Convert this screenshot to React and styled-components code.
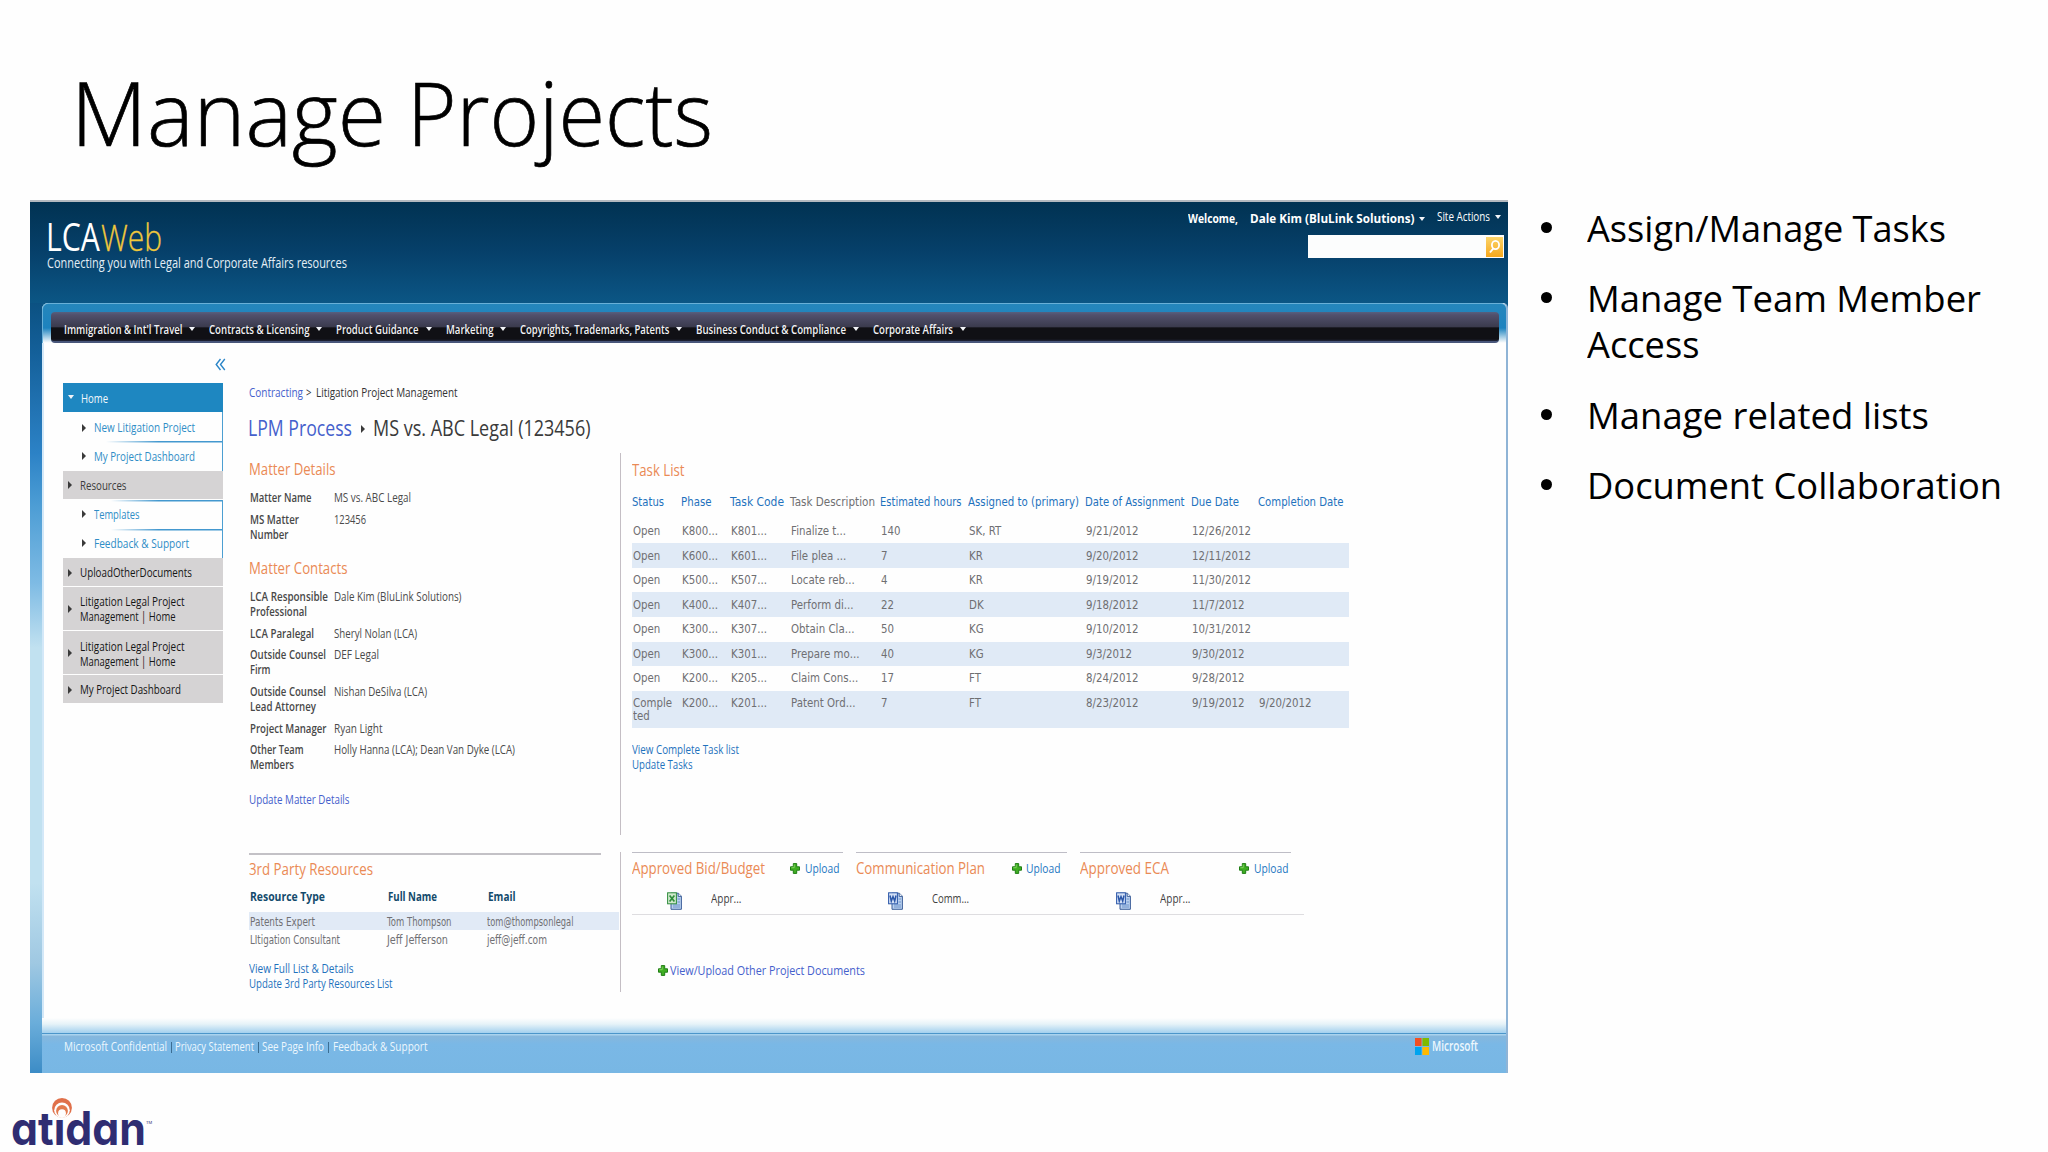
import React, { useLayoutEffect, useRef, useState } from "react";
import styled, { createGlobalStyle, css } from "styled-components";

const segoe = `"Open Sans", "Noto Sans", sans-serif`;
const tahoma = `"DejaVu Sans", sans-serif`;

const GlobalStyle = createGlobalStyle`
  * { box-sizing: border-box; }
  body { margin: 0; background: #fefefe; font-family: ${segoe}; }
  ul { list-style: none; margin: 0; padding: 0; }
`;

/* ---------- condensed text ---------- */
const FitBox = styled.span`
  display: inline-block;
  flex: none;
  width: ${(p) => p.$w}px;
  white-space: nowrap;
  vertical-align: top;
`;
const FitInner = styled.span`
  display: inline-block;
  white-space: nowrap;
  transform-origin: 0 50%;
`;
function Fit({ w, children }) {
  const ref = useRef(null);
  const [scale, setScale] = useState(1);
  useLayoutEffect(() => {
    setScale(w / parseFloat(getComputedStyle(ref.current).width));
  }, [w]);
  return (
    <FitBox $w={w}>
      <FitInner ref={ref} style={{ transform: `scaleX(${scale})` }}>{children}</FitInner>
    </FitBox>
  );
}
const Narrow = styled.span`
  display: inline-block;
  white-space: nowrap;
  transform-origin: 0 50%;
  transform: scaleX(0.89);
`;

/* ---------- slide ---------- */
const Slide = styled.main`
  width: 2048px;
  height: 1152px;
  overflow: hidden;
  background: #fefefe;
  color: #000;
`;
const SlideTitle = styled.h1`
  display: flex;
  gap: 21px;
  margin: 0;
  height: 200px;
  padding: 61.5px 0 0 70.5px;
  font-size: 89px;
  line-height: 100px;
  font-weight: 300;
  -webkit-text-stroke: 0.7px #000;
`;
const SlideBody = styled.div`
  display: flex;
  height: 873px;
  padding-left: 30px;
`;
const Bullets = styled.ul`
  padding: 5.7px 0 0 32.5px;
  display: flex;
  flex-direction: column;
  gap: 25.4px;
  font-size: 36.4px;
  line-height: 45.4px;
`;
const Bullet = styled.li`
  display: flex;
  gap: 35.5px;
  &::before {
    content: "";
    flex: none;
    width: 11px;
    height: 11px;
    margin-top: 16px;
    border-radius: 50%;
    background: #000;
  }
`;
const BulletLines = styled.div`
  display: flex;
  flex-direction: column;
`;

/* ---------- web page ---------- */
const Page = styled.section`
  width: 1478px;
  height: 873px;
  flex: none;
  display: flex;
  flex-direction: column;
  border-top: 2px solid #b4b9bf;
  background: linear-gradient(#013252 0, #06406a 50px, #0b5685 101px, #0b5685 100%);
`;
const Header = styled.header`
  height: 101px;
  flex: none;
  display: flex;
  justify-content: space-between;
  padding: 8px 4px 0 16px;
  color: #fff;
`;
const Brand = styled.div`
  padding-top: 9px;
`;
const BrandName = styled.div`
  display: flex;
  gap: 1px;
  height: 36px;
  font-size: 37.5px;
  line-height: 36px;
`;
const Web = styled.span`
  color: #f0c83c;
  font-weight: 300;
  -webkit-text-stroke: 0.3px #f0c83c;
`;
const Tagline = styled.div`
  margin-top: 0.3px;
  padding-left: 1px;
  font-size: 14px;
  line-height: 16px;
  color: #e4eef5;
`;
const Account = styled.div`
  display: flex;
  flex-direction: column;
  align-items: flex-end;
`;
const AccountRow = styled.div`
  display: flex;
  height: 24px;
  margin-top: 1px;
  padding-right: 3.2px;
  font-size: 12.6px;
  line-height: 16px;
  font-weight: 700;
`;
const User = styled.span`
  display: flex;
  align-items: center;
  height: 16px;
  gap: 4.5px;
  margin-left: 12px;
`;
const SiteActions = styled.span`
  display: flex;
  align-items: center;
  height: 16px;
  gap: 4.5px;
  margin: -2px 0 0 12px;
  font-weight: 400;
`;
const Search = styled.div`
  width: 196px;
  height: 23px;
  display: flex;
  justify-content: flex-end;
  align-items: center;
  padding-right: 1px;
  background: #fcfdfd;
`;
const SearchButton = styled.span`
  width: 17px;
  height: 20px;
  display: flex;
  background: linear-gradient(#fbd46a, #f7a81c);
`;
const Caret = styled.i`
  width: 0;
  height: 0;
  flex: none;
  border: ${(p) => p.$s || 3}px solid transparent;
  border-bottom-width: 0;
  border-top: ${(p) => (p.$s || 3) + 1.5}px solid #f2f4f8;
`;
const Arrow = styled.i`
  width: 0;
  height: 0;
  flex: none;
  border: 4px solid transparent;
  border-right-width: 0;
  border-left: ${(p) => p.$d || 4}px solid #3a3a3a;
`;

const Lower = styled.div`
  flex: 1;
  display: flex;
  min-height: 0;
`;
const Edge = styled.div`
  width: 12px;
  flex: none;
  background: linear-gradient(#0b5182 0, #14609a 50px, #2c82c6 150px, #4b9cd4 200px, #7ebbe4 280px,
    #c1e1f0 345px, #c1e1f0 580px, #9fc8e2 660px, #6aadda 720px, #3c8cc6 770px);
`;
const Frame = styled.div`
  flex: 1;
  display: flex;
  flex-direction: column;
  min-width: 0;
  background: #fff;
  border-right: 2px solid #8fb4d6;
  border-radius: 6px 5px 0 0;
`;
const NavShell = styled.div`
  height: 40px;
  flex: none;
  padding: 8px 7px 0 8px;
  border-top: 1.5px solid #68b0d8;
  border-left: 1px solid #68b0d8;
  border-radius: 6px 5px 0 0;
  background: linear-gradient(#2586bc 0, #1d83bf 24px, #ffffff 39px);
`;
const NavBar = styled.nav`
  height: 31px;
  display: flex;
  gap: 14px;
  padding: 8.7px 0 0 12.7px;
  border-radius: 4px;
  border-bottom: 2px solid #48567a;
  background: linear-gradient(#56607f 0, #51506c 3px, #3b3b4e 14.5px, #101015 16px, #101015 27px, #20253a 29px);
`;
const NavItem = styled.a`
  display: flex;
  align-items: center;
  height: 16px;
  gap: 6.8px;
  font-size: 11.8px;
  line-height: 16px;
  font-weight: 600;
  color: #f1f1f4;
`;
const Content = styled.div`
  flex: 1;
  display: flex;
  min-height: 0;
  border-left: 2px solid #d3e8f8;
  padding-left: 19px;
  background: #fefefe;
`;

/* ---------- sidebar ---------- */
const Sidebar = styled.aside`
  width: 160px;
  flex: none;
`;
const Collapse = styled.div`
  height: 39.5px;
  width: 163px;
  padding-top: 15px;
  display: flex;
  justify-content: flex-end;
`;
const SideItem = styled.a`
  font-size: 12px;
  line-height: 15px;
  height: ${(p) => p.$h}px;
  padding-top: ${(p) => p.$pt}px;
  margin-bottom: ${(p) => p.$mb || 0}px;
  display: flex;
  gap: 8px;
  padding-left: ${(p) => (p.$kind === "sub" ? 18.5 : 5)}px;
  ${(p) =>
    p.$kind === "active" &&
    css`
      background: #1e87c1;
      color: #f4f9fc;
      padding-left: 4.5px;
      gap: 7px;
    `}
  ${(p) =>
    p.$kind === "group" &&
    css`
      background: #d5d3d4;
      color: ${p.$soft ? "#3c3c3c" : "#161616"};
    `}
  ${(p) =>
    p.$kind === "sub" &&
    css`
      color: #2f8dc6;
      border-right: 1px solid #4c9fd2;
      background: ${p.$rule === "top"
        ? "linear-gradient(90deg, transparent 30%, #4398cf 60%) 0 0 / 100% 1.5px no-repeat"
        : p.$rule === "bottom"
          ? "linear-gradient(90deg, transparent 27%, #4398cf 60%) 0 100% / 100% 1.5px no-repeat"
          : "none"};
    `}
  & > i { margin-top: ${(p) => (p.$two ? 10.5 : 3.5)}px; }
`;
const Stack = styled.span`
  display: flex;
  flex-direction: column;
`;

/* ---------- main column ---------- */
const Main = styled.div`
  flex: 1;
  padding: 42.4px 0 0 26px;
  font-size: 12px;
  line-height: 15px;
  color: #4a4a4a;
`;
const Crumbs = styled.div`
  display: flex;
  gap: 3.8px;
  height: 15px;
  margin-left: -0.5px;
  color: #333;
`;
const Link = styled.a`
  color: ${(p) => (p.$tone === "violet" ? "#4560cc" : "#1f72bd")};
`;
const Heading = styled.h2`
  margin: 14.8px 0 11.8px -0.7px;
  display: flex;
  align-items: center;
  height: 26px;
  font-size: 21.5px;
  line-height: 26px;
  font-weight: 400;
  color: #3a3a3a;
  & > i { margin: 2px 8px 0 8.5px; }
`;
const Split = styled.div`
  display: flex;
  height: ${(p) => p.$h}px;
  margin-bottom: 17.5px;
`;
const LeftCol = styled.div`
  width: 372px;
  flex: none;
  border-right: 1px solid #c4bec4;
  padding-top: ${(p) => p.$pt || 0}px;
`;
const RightCol = styled.div`
  padding: ${(p) => p.$pt || 0}px 0 0 11px;
`;
const Section = styled.h3`
  margin: ${(p) => p.$m || "0"};
  height: 20px;
  font-size: 16.5px;
  line-height: 20px;
  font-weight: 400;
  color: #ea8a55;
`;
const Field = styled.div`
  display: grid;
  grid-template-columns: 84.5px 1fr;
  padding: 0 0 6.65px 0.6px;
`;
const FieldLabel = styled.span`
  display: flex;
  flex-direction: column;
  font-weight: 600;
  color: #484848;
`;
const Links = styled.div`
  margin-top: ${(p) => p.$mt}px;
  display: flex;
  flex-direction: column;
`;

const TaskTable = styled.div`
  width: 717px;
  margin-top: 15.7px;
  font-family: ${tahoma};
  font-size: 11.5px;
  color: #6f6f72;
`;
const TaskGrid = styled.div`
  display: grid;
  grid-template-columns: 49px 49.2px 60px 89.5px 88.2px 117.3px 106px 67px 1fr;
`;
const TaskHead = styled(TaskGrid)`
  height: 23.5px;
  line-height: 15px;
  & > a:nth-child(4) { color: #6f6f72; }
`;
const TaskRow = styled(TaskGrid)`
  height: ${(p) => (p.$tall ? 37.2 : 24.55)}px;
  padding: 6.2px 0 0 1.2px;
  line-height: 13px;
  background: ${(p) => (p.$striped ? "#e0eaf6" : "transparent")};
`;

const Rule = styled.div`
  width: ${(p) => p.$w}px;
  height: ${(p) => p.$t || 1.5}px;
  margin-top: ${(p) => p.$mt || 0}px;
  background: ${(p) => p.$c || "#c3c1c6"};
`;
const ResGrid = styled.div`
  display: grid;
  grid-template-columns: 137.4px 100px 1fr;
  padding-left: 0.6px;
`;
const ResHead = styled(ResGrid)`
  margin-top: 10.2px;
  height: 23.4px;
  font-weight: 700;
  color: #134a6c;
  padding-left: 1.3px;
`;
const ResRow = styled(ResGrid)`
  width: 370px;
  height: 18px;
  padding-top: 3.9px;
  font-family: ${tahoma};
  font-size: 11.5px;
  line-height: 13px;
  color: #707074;
  background: ${(p) => (p.$striped ? "#e1eaf6" : "transparent")};
`;
const Docs = styled.div`
  display: grid;
  grid-template-columns: 210.5px 210.5px 210.5px;
  column-gap: 13.5px;
  height: 61.5px;
`;
const Doc = styled.div`
  border-top: 1.6px solid #bebdc6;
  padding-top: 4.2px;
`;
const DocHead = styled.div`
  display: flex;
  justify-content: space-between;
  height: 33.7px;
  padding-right: ${(p) => p.$pr}px;
`;
const Upload = styled.a`
  display: flex;
  gap: 4.5px;
  padding-top: 3.2px;
  color: #1f78c2;
  & > svg { margin-top: 2.5px; }
`;
const DocFile = styled.div`
  display: flex;
  gap: 29px;
  padding-left: ${(p) => p.$pl}px;
  color: #3f3f3f;
  & > svg { margin-top: 1px; }
`;
const OtherDocs = styled(Upload)`
  margin: 44.8px 0 0 26px;
  gap: 2px;
  color: #4560cc;
`;

/* ---------- footer ---------- */
const Fade = styled.div`
  height: 15px;
  flex: none;
  background: linear-gradient(#fefefe, #e6f3f8 40%, #a3d0ee);
`;
const Footer = styled.footer`
  height: 40px;
  flex: none;
  display: flex;
  justify-content: space-between;
  padding: 4px 28px 0 22px;
  border-top: 1px solid #4c96ca;
  background: linear-gradient(#a9d3ee 0, #a9d3ee 1px, #86b7dc 2px, #7ab8e6 10px, #78b7e4 100%);
  font-size: 12px;
  line-height: 15px;
  color: #edf7fd;
`;
const FooterLinks = styled.div`
  display: flex;
  gap: 3.2px;
  padding-top: 1px;
`;
const Bar = styled.i`
  width: 1px;
  height: 11px;
  margin: 3px 0 0 0.8px;
  background: #3b6d92;
`;
const Microsoft = styled.div`
  display: flex;
  gap: 3px;
  font-size: 13.5px;
  font-weight: 600;
  line-height: 16px;
`;
const Atidan = styled.div`
  position: relative;
  display: flex;
  align-items: flex-start;
  margin: 32.3px 0 0 11px;
  height: 46px;
  font-family: Inter, sans-serif;
  font-feature-settings: "cv11" 1;
  font-size: 46px;
  line-height: 46px;
  font-weight: 700;
  color: #2f2d72;
`;
const Flame = styled.svg`
  position: absolute;
  left: 40px;
  top: -8.3px;
`;
const Trade = styled.span`
  margin: 15px 0 0 0;
  font-size: 4px;
  line-height: 5px;
  font-weight: 400;
`;

/* ---------- icons ---------- */
const Plus = () => (
  <svg width="10" height="11" viewBox="0 0 10 11">
    <path d="M3.3.6h3.4v3.2h2.8v3.4H6.7v3.2H3.3V7.2H.5V3.8h2.8z" fill="#3fae22" stroke="#1f7d14" strokeWidth="1" />
    <path d="M4.2 1.5v3.2H1.4" stroke="#8fdc6c" fill="none" strokeWidth=".8" />
  </svg>
);
const FileIcon = ({ excel }) => {
  const main = excel ? "#2f8d3c" : "#2b57a8";
  return (
    <svg width="15" height="18" viewBox="0 0 15 18">
      <path d="M4 1.2h7.4l3 3V17.3H4z" fill="#b9d0ef" stroke="#3d5f99" />
      <path d="M11.2 1.2v3.2h3.2" fill="#fff" stroke="#3d5f99" />
      <path d="M6 13h7M6 15h7M10.5 7h2.5M10.5 10h2.5" stroke="#6d92c8" />
      <rect x=".6" y=".8" width="8.8" height="11" fill={excel ? "#cfe8cb" : "#d3e0f5"} stroke={main} />
      {excel ? (
        <path d="M2.6 3.5l4.8 6M7.4 3.5l-4.8 6" stroke={main} strokeWidth="1.7" />
      ) : (
        <path d="M2 3.5l1.3 5.6L5 4.6l1.7 4.5L8 3.5" stroke={main} strokeWidth="1.5" fill="none" />
      )}
    </svg>
  );
};

/* ---------- data ---------- */
const nav = [
  ["Immigration & Int'l Travel", 118.5],
  ["Contracts & Licensing", 100.5],
  ["Product Guidance", 82.5],
  ["Marketing", 47.5],
  ["Copyrights, Trademarks, Patents", 149.5],
  ["Business Conduct & Compliance", 150],
  ["Corporate Affairs", 80],
];
const side = [
  { kind: "active", h: 29, pt: 8.5, lines: [["Home", 27]] },
  { kind: "sub", h: 31, pt: 8.5, rule: "bottom", lines: [["New Litigation Project", 101]] },
  { kind: "sub", h: 28.5, pt: 6.3, lines: [["My Project Dashboard", 101]] },
  { kind: "group", soft: true, h: 28, pt: 6.8, mb: 1, lines: [["Resources", 46.5]] },
  { kind: "sub", h: 29, pt: 6.8, rule: "top", lines: [["Templates", 45.5]] },
  { kind: "sub", h: 29, pt: 6.8, rule: "top", lines: [["Feedback & Support", 95]] },
  { kind: "group", h: 28, pt: 7, mb: 1, lines: [["UploadOtherDocuments", 112]] },
  { kind: "group", h: 43, pt: 7, mb: 1, lines: [["Litigation Legal Project", 104.5], ["Management | Home", 95.5]] },
  { kind: "group", h: 43, pt: 7.5, mb: 1, lines: [["Litigation Legal Project", 104.5], ["Management | Home", 95.5]] },
  { kind: "group", h: 27.5, pt: 7.3, lines: [["My Project Dashboard", 101]] },
];
const details = [
  [[["Matter Name", 61.5]], "MS vs. ABC Legal", 77],
  [[["MS Matter", 49], ["Number", 38.5]], "123456", 32],
];
const contacts = [
  [[["LCA Responsible", 78], ["Professional", 57]], "Dale Kim (BluLink Solutions)", 127.5],
  [[["LCA Paralegal", 64]], "Sheryl Nolan (LCA)", 83],
  [[["Outside Counsel", 76], ["Firm", 20.5]], "DEF Legal", 45],
  [[["Outside Counsel", 76], ["Lead Attorney", 66]], "Nishan DeSilva (LCA)", 93],
  [[["Project Manager", 76.5]], "Ryan Light", 48.5],
  [[["Other Team", 53.5], ["Members", 44]], "Holly Hanna (LCA); Dean Van Dyke (LCA)", 181],
];
const taskHead = [
  ["Status", 32], ["Phase", 30.5], ["Task Code", 54], ["Task Description", 85], ["Estimated hours", 81.5],
  ["Assigned to (primary)", 111], ["Date of Assignment", 99.5], ["Due Date", 48], ["Completion Date", 85.5],
];
const tasks = [
  ["Open", "K800...", "K801...", "Finalize t...", "140", "SK, RT", "9/21/2012", "12/26/2012", ""],
  ["Open", "K600...", "K601...", "File plea ...", "7", "KR", "9/20/2012", "12/11/2012", ""],
  ["Open", "K500...", "K507...", "Locate reb...", "4", "KR", "9/19/2012", "11/30/2012", ""],
  ["Open", "K400...", "K407...", "Perform di...", "22", "DK", "9/18/2012", "11/7/2012", ""],
  ["Open", "K300...", "K307...", "Obtain Cla...", "50", "KG", "9/10/2012", "10/31/2012", ""],
  ["Open", "K300...", "K301...", "Prepare mo...", "40", "KG", "9/3/2012", "9/30/2012", ""],
  ["Open", "K200...", "K205...", "Claim Cons...", "17", "FT", "8/24/2012", "9/28/2012", ""],
  ["Comple\nted", "K200...", "K201...", "Patent Ord...", "7", "FT", "8/23/2012", "9/19/2012", "9/20/2012"],
];
const docs = [
  { title: "Approved Bid/Budget", w: 133, pr: 3.5, pl: 35, excel: true, file: "Appr...", fw: 30.5, uw: 34.5 },
  { title: "Communication Plan", w: 129, pr: 6, pl: 32, file: "Comm...", fw: 37, uw: 34.5 },
  { title: "Approved ECA", w: 89, pr: 2.5, pl: 36, file: "Appr...", fw: 30.5, uw: 34.5 },
];
const footer = [["Microsoft Confidential", 103], ["Privacy Statement", 79], ["See Page Info", 62], ["Feedback & Support", 94.5]];
const bullets = [
  [["Assign/Manage Tasks", 359]],
  [["Manage Team Member", 394], ["Access", 112.5]],
  [["Manage related lists", 342]],
  [["Document Collaboration", 415]],
];

const Lines = ({ lines }) => lines.map(([t, w]) => <Fit key={t} w={w}>{t}</Fit>);
const Fields = ({ rows }) =>
  rows.map(([label, value, w]) => (
    <Field key={value}>
      <FieldLabel><Lines lines={label} /></FieldLabel>
      <Fit w={w}>{value}</Fit>
    </Field>
  ));

export default function App() {
  return (
    <Slide>
      <GlobalStyle />
      <SlideTitle><Fit w={315}>Manage</Fit> <Fit w={306}>Projects</Fit></SlideTitle>
      <SlideBody>
        <Page>
          <Header>
            <Brand>
              <BrandName>
                <Fit w={54}>LCA</Fit>
                <Web><Fit w={61}>Web</Fit></Web>
              </BrandName>
              <Tagline><Fit w={300}>Connecting you with Legal and Corporate Affairs resources</Fit></Tagline>
            </Brand>
            <Account>
              <AccountRow>
                <Fit w={50}>Welcome,</Fit>
                <User><Fit w={164.5}>Dale Kim (BluLink Solutions)</Fit><Caret /></User>
                <SiteActions><Fit w={53}>Site Actions</Fit><Caret /></SiteActions>
              </AccountRow>
              <Search>
                <SearchButton>
                  <svg width="17" height="20" viewBox="0 0 17 20">
                    <ellipse cx="9.5" cy="8" rx="3.6" ry="4.2" fill="none" stroke="#fff" strokeWidth="1.8" />
                    <path d="M7.2 11.5L4 15.5" stroke="#fff" strokeWidth="2" />
                  </svg>
                </SearchButton>
              </Search>
            </Account>
          </Header>
          <Lower>
            <Edge />
            <Frame>
              <NavShell>
                <NavBar>
                  {nav.map(([t, w]) => (
                    <NavItem key={t}><Fit w={w}>{t}</Fit><Caret /></NavItem>
                  ))}
                </NavBar>
              </NavShell>
              <Content>
                <Sidebar>
                  <Collapse>
                    <svg width="11" height="13" viewBox="0 0 11 13">
                      <path d="M5.5 1L1.2 6.5l4.3 5.5M9.8 1L5.5 6.5 9.8 12" fill="none" stroke="#2c86c8" strokeWidth="1.4" />
                    </svg>
                  </Collapse>
                  {side.map((s, i) => (
                    <SideItem key={i} $kind={s.kind} $h={s.h} $pt={s.pt} $mb={s.mb} $rule={s.rule} $soft={s.soft} $two={s.lines.length > 1}>
                      {s.kind === "active" ? <Caret /> : <Arrow />}
                      <Stack><Lines lines={s.lines} /></Stack>
                    </SideItem>
                  ))}
                </Sidebar>
                <Main>
                  <Crumbs>
                    <Link $tone="violet"><Fit w={54}>Contracting</Fit></Link>
                    <Fit w={5.5}>&gt;</Fit>
                    <Fit w={141.5}>Litigation Project Management</Fit>
                  </Crumbs>
                  <Heading>
                    <Link $tone="violet"><Fit w={104}>LPM Process</Fit></Link>
                    <Arrow />
                    <Fit w={217.5}>MS vs. ABC Legal (123456)</Fit>
                  </Heading>
                  <Split $h={382}>
                    <LeftCol $pt={5.8}>
                      <Section $m="0 0 11.2px"><Fit w={86.5}>Matter Details</Fit></Section>
                      <Fields rows={details} />
                      <Section $m="9.5px 0 11.3px"><Fit w={98.5}>Matter Contacts</Fit></Section>
                      <Fields rows={contacts} />
                      <Links $mt={13.3}>
                        <Link $tone="violet"><Fit w={100.5}>Update Matter Details</Fit></Link>
                      </Links>
                    </LeftCol>
                    <RightCol $pt={6.6}>
                      <Section><Fit w={52.5}>Task List</Fit></Section>
                      <TaskTable>
                        <TaskHead>
                          {taskHead.map(([t, w]) => <Link key={t}><Fit w={w}>{t}</Fit></Link>)}
                        </TaskHead>
                        {tasks.map((row, i) => (
                          <TaskRow key={i} $striped={i % 2 === 1} $tall={i === 7}>
                            {row.map((c, j) => (
                              <span key={j}>
                                {c.split("\n").map((l) => <Narrow key={l}>{l}</Narrow>)}
                              </span>
                            ))}
                          </TaskRow>
                        ))}
                      </TaskTable>
                      <Links $mt={13.8}>
                        <Link><Fit w={107}>View Complete Task list</Fit></Link>
                        <Link><Fit w={60.5}>Update Tasks</Fit></Link>
                      </Links>
                    </RightCol>
                  </Split>
                  <Split $h={140}>
                    <LeftCol>
                      <Rule $w={352} $t={1.2} $mt={1} />
                      <Section $m="3.9px 0 0"><Fit w={124}>3rd Party Resources</Fit></Section>
                      <ResHead>
                        <Fit w={75}>Resource Type</Fit><Fit w={49}>Full Name</Fit><Fit w={27.5}>Email</Fit>
                      </ResHead>
                      <ResRow $striped>
                        <Fit w={65}>Patents Expert</Fit><Fit w={64.5}>Tom Thompson</Fit><Fit w={86.5}>tom@thompsonlegal</Fit>
                      </ResRow>
                      <ResRow>
                        <Fit w={90}>LItigation Consultant</Fit><Fit w={61}>Jeff Jefferson</Fit><Fit w={60}>jeff@jeff.com</Fit>
                      </ResRow>
                      <Links $mt={12.6}>
                        <Link><Fit w={104.5}>View Full List &amp; Details</Fit></Link>
                        <Link><Fit w={143.5}>Update 3rd Party Resources List</Fit></Link>
                      </Links>
                    </LeftCol>
                    <RightCol>
                      <Docs>
                        {docs.map((d) => (
                          <Doc key={d.title}>
                            <DocHead $pr={d.pr}>
                              <Section><Fit w={d.w}>{d.title}</Fit></Section>
                              <Upload><Plus /><Fit w={d.uw}>Upload</Fit></Upload>
                            </DocHead>
                            <DocFile $pl={d.pl}>
                              <FileIcon excel={d.excel} />
                              <Fit w={d.fw}>{d.file}</Fit>
                            </DocFile>
                          </Doc>
                        ))}
                      </Docs>
                      <Rule $w={672} $t={1} $c="#dedde0" />
                      <OtherDocs><Plus /><Fit w={195}>View/Upload Other Project Documents</Fit></OtherDocs>
                    </RightCol>
                  </Split>
                </Main>
              </Content>
              <Fade />
              <Footer>
                <FooterLinks>
                  {footer.map(([t, w], i) => (
                    <React.Fragment key={t}>
                      {i > 0 && <Bar />}
                      <Fit w={w}>{t}</Fit>
                    </React.Fragment>
                  ))}
                </FooterLinks>
                <Microsoft>
                  <svg width="14" height="17" viewBox="0 0 14 17">
                    <path d="M0 0h6.6v8H0z" fill="#f25022" />
                    <path d="M7.4 0H14v8H7.4z" fill="#7fba00" />
                    <path d="M0 9h6.6v8H0z" fill="#00a4ef" />
                    <path d="M7.4 9H14v8H7.4z" fill="#ffb900" />
                  </svg>
                  <Fit w={46}>Microsoft</Fit>
                </Microsoft>
              </Footer>
            </Frame>
          </Lower>
        </Page>
        <Bullets>
          {bullets.map((b) => (
            <Bullet key={b[0][0]}><BulletLines><Lines lines={b} /></BulletLines></Bullet>
          ))}
        </Bullets>
      </SlideBody>
      <Atidan>
        <Fit w={135}>atidan</Fit>
        <Trade>TM</Trade>
        <Flame width="22" height="24" viewBox="0 0 22 24">
          <circle cx="11" cy="11" r="10.8" fill="#fefefe" />
          <rect x="6" y="12" width="10" height="10.5" fill="#fefefe" />
          <circle cx="11" cy="10.8" r="9.9" fill="#e0704a" />
          <circle cx="11" cy="13.2" r="7.8" fill="#fefefe" />
          <circle cx="11" cy="13.9" r="5.9" fill="#e27a4e" />
          <circle cx="11" cy="16.2" r="3.9" fill="#fefefe" />
        </Flame>
      </Atidan>
    </Slide>
  );
}
